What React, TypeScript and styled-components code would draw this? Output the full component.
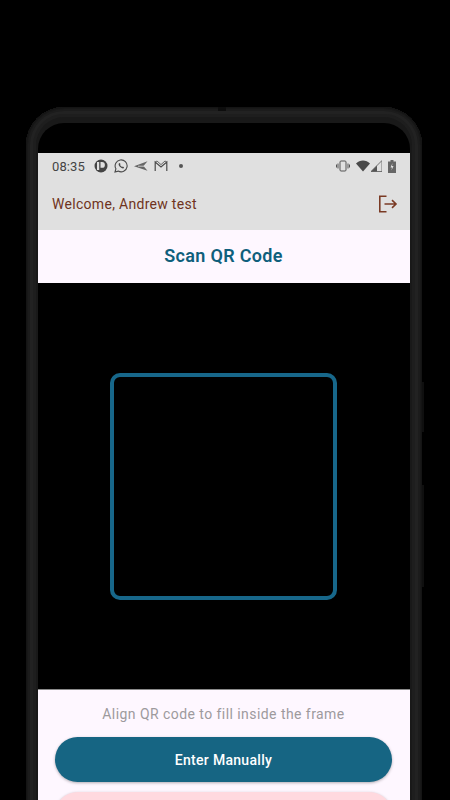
import React, { FC } from 'react';
import styled, { createGlobalStyle } from 'styled-components';

const GlobalStyle = createGlobalStyle`
  html, body {
    margin: 0;
    padding: 0;
    background: #000;
    overflow: hidden;
    font-family: Roboto, "Liberation Sans", sans-serif;
  }
`;

const Page = styled.div`
  width: 450px;
  height: 800px;
  padding: 107px 0 0 26px;
  box-sizing: border-box;
  overflow: hidden;
`;

const Phone = styled.div`
  position: relative;
  width: 396px;
  height: 760px;
  box-sizing: border-box;
  padding: 16px 12px 0;
  border-radius: 38px 38px 0 0;
  background: #191919;
  box-shadow:
    inset 0 0 0 1px #141414,
    inset 0 0 0 2px #181818,
    inset 0 0 0 4px #1c1c1c,
    inset 0 0 0 7px #222,
    inset 0 0 0 10px #1e1e1e;
`;

const Camera = styled.div`
  position: absolute;
  top: 0;
  left: 192px;
  width: 8px;
  height: 4px;
  background: #0d0d0d;
`;

const SideButton = styled.div<{ $top: number; $height: number }>`
  position: absolute;
  right: -2px;
  top: ${(p) => p.$top}px;
  width: 2px;
  height: ${(p) => p.$height}px;
  background: #0f0f0f;
`;

const Screen = styled.div`
  height: 100%;
  background: #000;
  border-radius: 26px 26px 0 0;
  padding-top: 30px;
  overflow: hidden;
  box-sizing: border-box;
  display: flex;
  flex-direction: column;
`;

const AppHeader = styled.header`
  height: 77px;
  flex: none;
  background: #e0e0e0;
  display: flex;
  flex-direction: column;
  box-sizing: border-box;
  padding: 0 12px 0 14px;
`;

const StatusBar = styled.div`
  height: 26px;
  display: flex;
  align-items: center;
  color: #444;
  font-size: 13px;
`;

const Time = styled.span`
  width: 43px;
  letter-spacing: 0.1px;
`;

const StatusIcons = styled.div`
  display: flex;
  align-items: center;
  gap: 6px;
`;

const Dot = styled.span`
  width: 4px;
  height: 4px;
  margin-left: 5px;
  border-radius: 50%;
  background: #555;
`;

const StatusRight = styled.div`
  margin-left: auto;
  margin-right: 2px;
  display: flex;
  align-items: center;
  gap: 4px;
`;

const WelcomeRow = styled.div`
  flex: 1;
  display: flex;
  align-items: center;
  justify-content: space-between;
  padding-bottom: 2px;
`;

const Welcome = styled.span`
  font-size: 14px;
  letter-spacing: 0.3px;
  color: #6f3320;
`;

const TitleBar = styled.div`
  height: 53px;
  flex: none;
  box-sizing: border-box;
  padding: 0 1px 2px 0;
  background: #fef7ff;
  display: flex;
  align-items: center;
  justify-content: center;
  color: #0f5f7c;
  font-size: 18px;
  font-weight: 600;
  letter-spacing: 0.33px;
`;

const CameraFeed = styled.div`
  height: 406px;
  flex: none;
  box-sizing: border-box;
  padding-right: 2px;
  background: #000;
  display: flex;
  align-items: center;
  justify-content: center;
`;

const ScanFrame = styled.div`
  width: 227px;
  height: 227px;
  box-sizing: border-box;
  border: 4px solid #17678a;
  border-radius: 10px;
`;

const BottomPanel = styled.div`
  flex: 1;
  background: #fef7ff;
  border-top: 1px solid #8a8a8a;
  padding: 16px 18px 0 17px;
  display: flex;
  flex-direction: column;
  align-items: center;
`;

const Hint = styled.div`
  font-size: 14px;
  line-height: 16px;
  letter-spacing: 0.44px;
  color: #9d9a9d;
  margin-bottom: 15px;
`;

const PillButton = styled.button<{ $bg: string; $fg: string }>`
  width: 337px;
  height: 45px;
  flex: none;
  border: 0;
  border-radius: 23px;
  margin-bottom: 10px;
  background: ${(p) => p.$bg};
  color: ${(p) => p.$fg};
  font-family: inherit;
  font-size: 14px;
  font-weight: 500;
  letter-spacing: 0.3px;
  box-shadow: 0 1px 3px rgba(0, 0, 0, 0.3);
`;

const App: FC = () => (
  <Page>
    <GlobalStyle />
    <Phone>
      <Camera />
      <SideButton $top={275} $height={50} />
      <SideButton $top={378} $height={102} />
      <Screen>
        <AppHeader>
          <StatusBar>
            <Time>08:35</Time>
            <StatusIcons>
              <svg width="14" height="14" viewBox="0 0 14 14" style={{ marginLeft: -1 }}>
                <circle cx="7" cy="7" r="6.5" fill="#444" />
                <rect x="3" y="3" width="2.2" height="8" fill="#e0e0e0" />
                <path d="M6.500 3H8a2.800 2.800 0 0 1 0 5.800H6.500z" fill="#e0e0e0" />
              </svg>
              <svg width="14" height="14" viewBox="0 0 14 14" fill="none" stroke="#4a4a4a" strokeWidth="1.1">
                <path d="M1 13l.9-3.2A6 6 0 1 1 4.2 12.1z" />
                <path d="M4.8 4.4c-.6 1 .2 2.6 1.4 3.7 1.2 1.1 2.6 1.8 3.4 1.2l.5-1-1.4-.8-.6.6C7.300 7.600 6.400 6.700 6 5.800l.6-.6-.8-1.300z" fill="#4a4a4a" stroke="none" />
              </svg>
              <svg width="14" height="14" viewBox="0 0 14 14">
                <path d="M0 7.200 13.500 2.200 9.500 7l4 4.800z" fill="#666" />
                <path d="M4 7.200h6" stroke="#e0e0e0" strokeWidth="0.8" />
              </svg>
              <svg width="14" height="14" viewBox="0 0 14 14" fill="none" stroke="#4a4a4a" strokeWidth="1.2">
                <path d="M1.200 12V3l5.800 5 5.800-5v9" />
                <path d="M1.200 3 3 2l4 3.600L11 2l1.800 1" strokeWidth="0.8" />
              </svg>
              <Dot />
            </StatusIcons>
            <StatusRight>
              <svg width="14" height="12" viewBox="0 0 14 12" fill="none" stroke="#555" strokeWidth="1">
                <rect x="4" y="1" width="6" height="10" rx="1" />
                <path d="M2 3.500v5M.5 4.500v3M12 3.500v5M13.500 4.500v3" />
              </svg>
              <svg width="14" height="12" viewBox="0 0 14 12" style={{ marginLeft: 2 }}>
                <path d="M0 3.500C3.800-.5 10.200-.5 14 3.500L7 11.500z" fill="#4a4a4a" />
              </svg>
              <svg width="11" height="12" viewBox="0 0 11 12" style={{ marginLeft: -3 }}>
                <path d="M0 11.500 11 .5v11z" fill="#e0e0e0" stroke="#555" strokeWidth="0.8" />
                <path d="M0 11.500 6 5.500v6z" fill="#555" />
              </svg>
              <svg width="8" height="13" viewBox="0 0 8 13" style={{ marginLeft: 2 }}>
                <path d="M2.500 0h3v1.500H8V13H0V1.500h2.500z" fill="#666" />
                <path d="M4.500 3 2.500 7.500H4L3.500 10.500 5.500 6H4z" fill="#e0e0e0" />
              </svg>
            </StatusRight>
          </StatusBar>
          <WelcomeRow>
            <Welcome>Welcome, Andrew test</Welcome>
            <svg width="20" height="20" viewBox="0 0 20 20" fill="none" stroke="#7a3a24" strokeWidth="1.6">
              <path d="M8.500 2.200H1.800v15.600h6.700" />
              <path d="M6.500 10h11.500M14 6.200l4 3.800-4 3.800" />
            </svg>
          </WelcomeRow>
        </AppHeader>
        <TitleBar>Scan QR Code</TitleBar>
        <CameraFeed>
          <ScanFrame />
        </CameraFeed>
        <BottomPanel>
          <Hint>Align QR code to fill inside the frame</Hint>
          <PillButton $bg="#166583" $fg="#fff">Enter Manually</PillButton>
          <PillButton $bg="#ffd9df" $fg="#7a2233" />
        </BottomPanel>
      </Screen>
    </Phone>
  </Page>
);

export default App;
